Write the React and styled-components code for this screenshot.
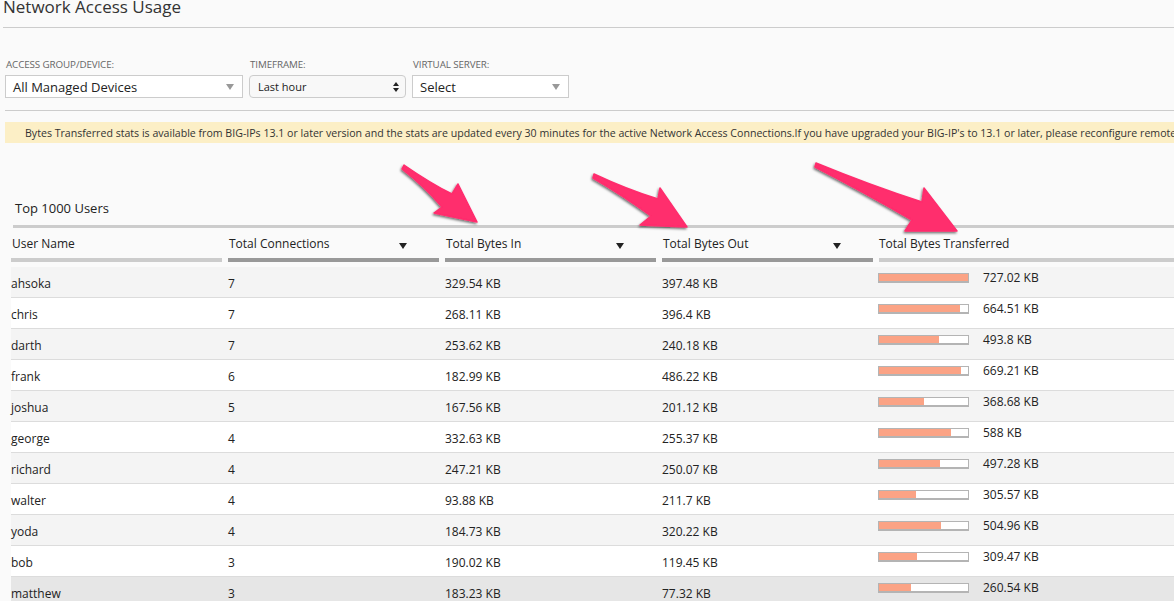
import React from 'react';
import styled, { createGlobalStyle } from 'styled-components';

const GlobalStyle = createGlobalStyle`
  html, body {
    margin: 0;
    padding: 0;
    background: #fafafa;
    overflow: hidden;
  }
  body {
    font-family: "Open Sans", "DejaVu Sans", sans-serif;
    color: #222;
  }
`;

const Page = styled.div`
  position: relative;
  width: 1174px;
  height: 601px;
  overflow: hidden;
`;

const Title = styled.h1`
  margin: -3px 0 0 3px;
  padding-bottom: 10px;
  font-size: 17px;
  line-height: 20px;
  font-weight: 400;
  color: #333;
  border-bottom: 1px solid #ccc;
`;

const Filters = styled.div`
  display: flex;
  gap: 6px;
  margin: 31px 0 0 5px;
  padding-bottom: 12px;
  border-bottom: 1px solid #ccc;
`;

const Field = styled.div`
  display: flex;
  flex-direction: column;
  gap: 5px;
`;

const Label = styled.label`
  font-size: 9.8px;
  line-height: 11px;
  color: #666;
  text-transform: uppercase;
  padding-left: 1px;
  letter-spacing: -0.1px;
`;

const SelectBox = styled.div`
  width: ${p => p.width}px;
  height: 23px;
  box-sizing: border-box;
  display: flex;
  align-items: center;
  justify-content: space-between;
  padding: 0 ${p => (p.rounded ? 6 : 8)}px 0 ${p => (p.rounded ? 8 : 7)}px;
  background: ${p => (p.rounded ? '#f8f8f8' : '#fff')};
  border: 1px solid #ccc;
  border-radius: ${p => (p.rounded ? '4px' : '0')};
  font-size: ${p => (p.rounded ? 11 : 13)}px;
  color: #222;
`;

const Caret = styled.span`
  width: 0;
  height: 0;
  border-left: 4px solid transparent;
  border-right: 4px solid transparent;
  border-top: 6px solid ${p => p.color || '#999'};
`;

const Stepper = styled.span`
  display: flex;
  flex-direction: column;
  gap: 2px;
  &::before, &::after {
    content: '';
    width: 0;
    height: 0;
    border-left: 3px solid transparent;
    border-right: 3px solid transparent;
  }
  &::before { border-bottom: 4px solid #222; }
  &::after { border-top: 4px solid #222; }
`;

const Banner = styled.div`
  margin: 11px 0 0 5px;
  height: 21px;
  padding-left: 20px;
  display: flex;
  align-items: center;
  background: #fcefc6;
  font-size: 10.6px;
  color: #333;
  white-space: nowrap;
  overflow: hidden;
`;

const TableTitle = styled.div`
  margin: 56px 0 0 15px;
  font-size: 13px;
  line-height: 18px;
  color: #222;
  padding-bottom: 8px;
`;

const Table = styled.div`
  margin-left: 11px;
`;

const TopRule = styled.div`
  height: 3px;
  margin-left: 2px;
  background: #ccc;
`;

const HeadRow = styled.div`
  display: flex;
`;

const HeadCell = styled.div`
  flex: ${p => (p.grow ? '1' : '0 0 217px')};
  padding-right: ${p => (p.grow ? 0 : 6)}px;
  box-sizing: border-box;
`;

const HeadLabel = styled.div`
  display: flex;
  align-items: center;
  padding: 8px ${p => (p.sort ? 32 : 0)}px 6px ${p => (p.first ? 1 : 0)}px;
  font-size: 12px;
  line-height: 16px;
  color: #222;
  border-bottom: 4px solid ${p => (p.dark ? '#999' : '#ccc')};
  & > span:last-child { margin-left: auto; margin-top: 3px; }
`;

const Body = styled.div`
  margin-top: 5px;
`;

const Row = styled.div`
  display: flex;
  height: 30px;
  border-bottom: 1px solid #dcdcdc;
  background: ${p => p.bg};
  font-size: 12px;
`;

const Cell = styled.div`
  flex: 0 0 217px;
  display: flex;
  align-items: center;
  padding-top: 2px;
  box-sizing: border-box;
`;

const TransferCell = styled.div`
  flex: 1;
  display: flex;
  align-items: center;
  gap: 14px;
  padding-top: 3px;
  margin-left: -1px;
  height: 16px;
  line-height: 16px;
`;

const Bar = styled.div`
  width: 91px;
  height: 10px;
  box-sizing: border-box;
  border: 1px solid #b4b4b4;
  border-bottom-width: 2px;
  background: #fff;
  display: flex;
`;

const Fill = styled.div`
  background: #fba385;
  height: 100%;
`;

const Overlay = styled.svg`
  position: absolute;
  left: 0;
  top: 0;
  pointer-events: none;
`;

const users = [
  ['ahsoka', 7, '329.54 KB', '397.48 KB', 727.02],
  ['chris', 7, '268.11 KB', '396.4 KB', 664.51],
  ['darth', 7, '253.62 KB', '240.18 KB', 493.8],
  ['frank', 6, '182.99 KB', '486.22 KB', 669.21],
  ['joshua', 5, '167.56 KB', '201.12 KB', 368.68],
  ['george', 4, '332.63 KB', '255.37 KB', 588],
  ['richard', 4, '247.21 KB', '250.07 KB', 497.28],
  ['walter', 4, '93.88 KB', '211.7 KB', 305.57],
  ['yoda', 4, '184.73 KB', '320.22 KB', 504.96],
  ['bob', 3, '190.02 KB', '119.45 KB', 309.47],
  ['matthew', 3, '183.23 KB', '77.32 KB', 260.54],
];

const max = 727.02;

const arrows = [
  'M404,165 Q430,183 452,194 L458,184 L477,222 L434,213 L442,207 Q424,186 402,169 Z',
  'M594,174 Q628,190 658,199 L660,188 L687,227 L640,225 L651,216 Q624,196 593,178 Z',
  'M816,163 Q872,186 922,202 L924,188 L957,231 L905,231 L912,220 Q862,191 815,167 Z',
];

const Arrows = () => (
  <Overlay width="1174" height="601" viewBox="0 0 1174 601">
    <defs>
      <filter id="shadow" x="-10%" y="-10%" width="130%" height="130%">
        <feDropShadow dx="-1" dy="1.5" stdDeviation="0.8" floodColor="#000" floodOpacity="0.55" />
      </filter>
    </defs>
    {arrows.map((d, i) => (
      <path key={i} d={d} fill="#ff2d6d" stroke="#ff2d6d" strokeWidth="1.5" strokeLinejoin="round" filter="url(#shadow)" />
    ))}
  </Overlay>
);

const rowBg = (i) => {
  if (i === users.length - 1) return '#e6e6e6';
  return i % 2 === 0 ? '#f4f4f4' : '#fff';
};

export default function App() {
  return (
    <Page>
      <GlobalStyle />
      <Title>Network Access Usage</Title>
      <Filters>
        <Field>
          <Label>Access Group/Device:</Label>
          <SelectBox width={238}>
            All Managed Devices
            <Caret />
          </SelectBox>
        </Field>
        <Field>
          <Label>Timeframe:</Label>
          <SelectBox width={157} rounded>
            Last hour
            <Stepper />
          </SelectBox>
        </Field>
        <Field>
          <Label>Virtual Server:</Label>
          <SelectBox width={157}>
            Select
            <Caret />
          </SelectBox>
        </Field>
      </Filters>
      <Banner>
        Bytes Transferred stats is available from BIG-IPs 13.1 or later version and the stats are updated every 30 minutes for the active Network Access Connections.If you have upgraded your BIG-IP's to 13.1 or later, please reconfigure remote logging for the devices.
      </Banner>
      <TableTitle>Top 1000 Users</TableTitle>
      <Table>
        <TopRule />
        <HeadRow>
          <HeadCell>
            <HeadLabel first>User Name</HeadLabel>
          </HeadCell>
          <HeadCell>
            <HeadLabel dark sort first>
              <span>Total Connections</span>
              <Caret color="#222" as="span" />
            </HeadLabel>
          </HeadCell>
          <HeadCell>
            <HeadLabel dark sort first>
              <span>Total Bytes In</span>
              <Caret color="#222" as="span" />
            </HeadLabel>
          </HeadCell>
          <HeadCell>
            <HeadLabel dark sort first>
              <span>Total Bytes Out</span>
              <Caret color="#222" as="span" />
            </HeadLabel>
          </HeadCell>
          <HeadCell grow>
            <HeadLabel>Total Bytes Transferred</HeadLabel>
          </HeadCell>
        </HeadRow>
        <Body>
          {users.map(([name, conns, bin, bout, total], i) => (
            <Row key={name} bg={rowBg(i)}>
              <Cell>{name}</Cell>
              <Cell>{conns}</Cell>
              <Cell>{bin}</Cell>
              <Cell>{bout}</Cell>
              <TransferCell>
                <Bar>
                  <Fill style={{ width: `${(total / max) * 100}%` }} />
                </Bar>
                <span>{total} KB</span>
              </TransferCell>
            </Row>
          ))}
        </Body>
      </Table>
      <Arrows />
    </Page>
  );
}
